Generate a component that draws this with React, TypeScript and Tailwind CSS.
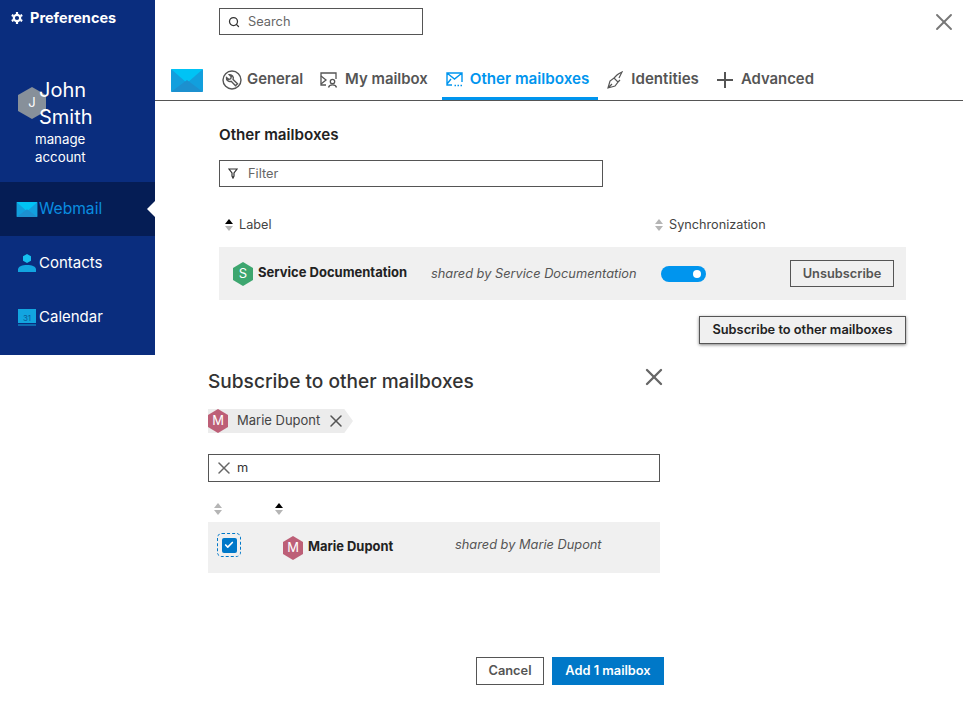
import { Check, Search, X } from 'lucide-react'

const font = { fontFamily: 'Inter, "Liberation Sans", sans-serif' }

function Hex({ letter, fill, className }: { letter: string; fill: string; className: string }) {
  return (
    <span className={`inline-flex shrink-0 items-center justify-center text-white ${className}`}>
      <span className="relative inline-flex h-full w-full items-center justify-center">
        <svg viewBox="0 0 20 23" className="absolute inset-0 h-full w-full" preserveAspectRatio="none">
          <polygon points="10,0 20,5.75 20,17.25 10,23 0,17.25 0,5.75" fill={fill} />
        </svg>
        <span className="relative">{letter}</span>
      </span>
    </span>
  )
}

function Sorter({ active }: { active?: boolean }) {
  return (
    <svg viewBox="0 0 8 12" className="h-3 w-2 shrink-0">
      <polygon points="4,0 8,5 0,5" fill={active ? '#000' : '#b5b5b5'} />
      <polygon points="4,12 8,7 0,7" fill="#b5b5b5" />
    </svg>
  )
}

function MailIcon({ className }: { className: string }) {
  return (
    <svg viewBox="0 0 32 23" className={className}>
      <rect width="32" height="23" rx="1" fill="#129fdd" />
      <polygon points="0,0 32,0 16,14" fill="#00c3f5" />
      <polygon points="0,23 16,11 32,23" fill="#1c90cf" />
    </svg>
  )
}

export default function App() {
  return (
    <div className="min-h-[702px] w-[963px] overflow-hidden bg-white text-[#222]" style={font}>
      <div className="flex">
        <aside className="relative h-[355px] w-[155px] shrink-0 bg-[#0a2d7e] text-white">
          <div className="flex items-center gap-[7px] pl-[11px] pt-[10px] text-[14.5px] font-bold leading-4">
            <svg viewBox="0 0 12 12" className="h-3 w-3" fill="none" stroke="currentColor" strokeWidth="2.200">
              <circle cx="6" cy="6" r="3.200" />
              <path d="M6 0v2M6 10v2M0.800 3l1.700 1M9.500 8l1.700 1M0.800 9l1.700-1M9.500 4l1.700-1" />
            </svg>
            Preferences
          </div>
          <Hex letter="J" fill="#87909a" className="absolute left-[18px] top-[87px] h-8 w-7 text-[13px]" />
          <div className="relative pl-[39px] pt-[51px] text-[20px] leading-[27px]">
            John
            <br />
            Smith
          </div>
          <div className="-mt-[1px] pl-[35px] text-[13.3px] leading-[18px]">
            manage
            <br />
            account
          </div>
          <nav className="mt-4 text-[15px]">
            <div className="relative flex h-[54px] items-center bg-[#051d55] pl-4 text-[#0a8de0]">
              <MailIcon className="h-[15px] w-[22px]" />
              <span className="ml-[1px] text-[15.6px]">Webmail</span>
              <span className="absolute right-0 top-[19px] border-y-[8px] border-r-[8px] border-y-transparent border-r-white" />
            </div>
            <div className="flex h-[54px] items-center pl-[18px]">
              <svg viewBox="0 0 18 18" className="h-[18px] w-[18px]">
                <path d="M9 0l4 2.300v4.400L9 9 5 6.700V2.300z" fill="#16c0ef" />
                <path d="M0 18v-3c1-3 4-4 9-4s8 1 9 4v3z" fill="#12a5e0" />
              </svg>
              <span className="ml-[3px]">Contacts</span>
            </div>
            <div className="flex h-[54px] items-center pl-[18px]">
              <svg viewBox="0 0 18 18" className="h-[18px] w-[18px]">
                <rect y="1" width="18" height="14" fill="#12a5e0" />
                <rect y="16.500" width="18" height="1" fill="#12a5e0" />
                <text x="9" y="13" fontSize="8" textAnchor="middle" fill="#0a5c99">31</text>
              </svg>
              <span className="ml-[3px]">Calendar</span>
            </div>
          </nav>
        </aside>

        <main className="min-w-0 flex-1 text-[#555]">
          <div className="flex h-[60px] items-start justify-between pl-16 pr-[5px] pt-2">
            <div className="flex h-[27px] w-[204px] items-center gap-2 border border-[#555] pl-2 text-[12.8px] text-[#666]">
              <Search className="h-3 w-3 text-[#333]" strokeWidth={2.5} />
              Search
            </div>
            <X className="h-7 w-7 text-[#777]" strokeWidth={1.6} />
          </div>

          <div className="flex h-[41px] border-b border-[#555] pl-4 text-[14.9px] font-semibold">
            <MailIcon className="mt-[9px] h-[23px] w-8" />
            <div className="ml-[19px] flex">
              <div className="flex h-10 items-center gap-[5px] pb-[1px] pr-[17px]">
                <svg viewBox="0 0 20 20" className="h-5 w-5" fill="none" stroke="currentColor" strokeWidth="1.400">
                  <circle cx="10" cy="10" r="9" />
                  <path d="M4.500 7.500a3.500 3.500 0 0 0 4.700 3.800l4.300 4.500 2-2-4.400-4.300a3.500 3.500 0 0 0-3.800-4.700l2 2-.6 2-2 .6z" />
                </svg>
                General
              </div>
              <div className="flex h-10 items-center gap-[7px] pb-[1px] pr-[17px]">
                <svg viewBox="0 0 18 16" className="h-4 w-[18px]" fill="none" stroke="currentColor" strokeWidth="1.300">
                  <path d="M6 13H1V1h15v6" />
                  <path d="M1 4l5 4-5 4" />
                  <circle cx="12.500" cy="9.500" r="2.200" />
                  <path d="M8.500 15.500c.5-2 2-2.600 4-2.600s3.500.6 4 2.600" />
                </svg>
                My mailbox
              </div>
              <div className="-ml-[3px] flex h-10 items-center gap-[7px] border-b-[3px] border-[#0095ee] pl-1 pr-[9px] pt-[2px] text-[15.2px] text-[#0095ee]">
                <svg viewBox="0 0 17 15" className="h-[15px] w-[17px]" fill="none" stroke="currentColor" strokeWidth="1.400">
                  <path d="M6 13H1V1h15v9M1 1l7.500 6L16 1M1 12l4-5" />
                  <path d="M8.500 13.500h1.500M11.500 13.500h1.500M14.500 13.500h1.500" />
                </svg>
                Other mailboxes
              </div>
              <div className="ml-[9px] flex h-10 items-center gap-[8px] pb-[1px] text-[15.1px]">
                <svg viewBox="0 0 16 18" className="h-[18px] w-4" fill="none" stroke="currentColor" strokeWidth="1.200">
                  <path d="M1 17l2-7 4-3 4 4-3 4zM1 17l4-4M7 7l3-3M11 11l2-2M10 4c1-1 3-2 5-3-1 2-2 4-3 6" />
                </svg>
                Identities
              </div>
              <div className="ml-[18px] flex h-10 items-center gap-2 pb-[1px]">
                <svg viewBox="0 0 16 16" className="h-4 w-4" fill="none" stroke="currentColor" strokeWidth="2">
                  <path d="M8 0v16M0 8h16" />
                </svg>
                Advanced
              </div>
            </div>
          </div>

          <div className="pl-16 pr-[57px]">
            <h2 className="pt-[26px] text-[15.2px] font-semibold leading-4 text-[#222]">Other mailboxes</h2>
            <div className="mt-[17px] flex h-[27px] w-[384px] items-center gap-[10px] border border-[#555] pl-2 text-[12.8px] text-[#666]">
              <svg viewBox="0 0 10 11" className="h-[11px] w-[10px]" fill="none" stroke="#333" strokeWidth="1.200">
                <path d="M1 1h8L6 5v3L5 10 4 8V5z" />
              </svg>
              Filter
            </div>
            <div className="flex h-[60px] items-center pt-[16px] text-[12.7px] text-[#444]">
              <div className="flex w-[436px] items-center gap-[6px] pl-[6px]">
                <Sorter active />
                Label
              </div>
              <div className="flex items-center gap-[6px]">
                <Sorter />
                Synchronization
              </div>
            </div>
            <div className="flex h-[53px] items-center bg-[#f0f0f0] pl-[14px] pr-3">
              <Hex letter="S" fill="#3da66f" className="h-[24px] w-5 text-[13px]" />
              <span className="mb-[2px] ml-[5px] w-[173px] text-[13px] font-bold text-[#222]">Service Documentation</span>
              <span className="w-[230px] text-[12.8px] italic text-[#555]">shared by Service Documentation</span>
              <span className="flex h-4 w-[45px] items-center justify-end rounded-full bg-[#0095ee] pr-[5px]">
                <span className="h-2 w-2 rounded-full bg-white" />
              </span>
              <button className="ml-auto h-[27px] w-[104px] border border-[#555] text-[12.8px] font-semibold text-[#555]">
                Unsubscribe
              </button>
            </div>
            <div className="mt-4 flex justify-end">
              <button className="h-7 w-[207px] border border-[#555] bg-[#f0f0f0] text-[12.8px] font-semibold text-[#222] shadow-[0_1px_3px_rgba(0,0,0,0.5)]">
                Subscribe to other mailboxes
              </button>
            </div>
          </div>
        </main>
      </div>

      <section className="ml-[208px] w-[456px] text-[#333]">
        <div className="flex h-[39px] items-start justify-between">
          <h2 className="pt-[14px] text-[19.1px] font-medium leading-[24px]">Subscribe to other mailboxes</h2>
          <X className="mr-[-4px] mt-2 h-7 w-7 text-[#666]" strokeWidth={2} />
        </div>
        <div className="mt-[15px] flex h-6 w-[145px] items-center bg-[#ececec] [clip-path:polygon(0_0,94%_0,100%_50%,94%_100%,0_100%)]">
          <Hex letter="M" fill="#bd5f77" className="h-6 w-5 text-[13px]" />
          <span className="ml-[9px] text-[13px] text-[#444]">Marie Dupont</span>
          <X className="ml-[6px] h-5 w-5 text-[#555]" strokeWidth={1.8} />
        </div>
        <div className="mt-[21px] flex h-7 w-[452px] items-center border border-[#555] pl-[5px] text-[12.8px]">
          <X className="h-5 w-5 text-[#666]" strokeWidth={1.8} />
          <span className="ml-[3px] text-[#333]">m</span>
        </div>
        <div className="flex h-10 w-[452px] items-center pt-[14px]">
          <span className="ml-[6px]"><Sorter /></span>
          <span className="ml-[53px]"><Sorter active /></span>
        </div>
        <div className="flex h-[51px] w-[452px] items-center bg-[#f0f0f0]">
          <span className="mb-[5px] ml-[9px] flex h-6 w-6 items-center justify-center rounded-[5px] border border-dashed border-[#0078c8]">
            <span className="flex h-[15px] w-[15px] items-center justify-center rounded-[2px] bg-[#0078c8]">
              <Check className="h-[10px] w-[10px] text-white" strokeWidth={4} />
            </span>
          </span>
          <Hex letter="M" fill="#bd5f77" className="ml-[42px] h-6 w-5 text-[13px]" />
          <span className="mb-[2px] ml-[5px] w-[147px] text-[12.9px] font-bold text-[#222]">Marie Dupont</span>
          <span className="mb-[6px] text-[12.8px] italic text-[#555]">shared by Marie Dupont</span>
        </div>
        <div className="mt-[84px] flex justify-end gap-2">
          <button className="h-7 w-[68px] border border-[#555] text-[12.8px] font-semibold text-[#555]">Cancel</button>
          <button className="h-7 w-[112px] bg-[#0078c8] text-[12.8px] font-semibold text-white">Add 1 mailbox</button>
        </div>
      </section>
    </div>
  )
}
